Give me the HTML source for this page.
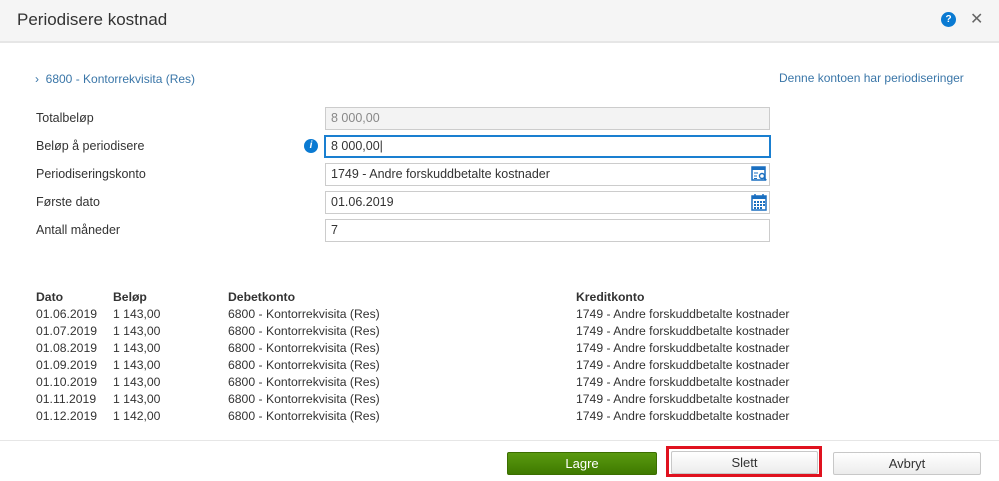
<!DOCTYPE html><html><head><style>
body{margin:0;width:999px;height:481px;background:#fff;font-family:"Liberation Sans",sans-serif;font-size:12.5px;color:#333;position:relative;overflow:hidden}
.a{position:absolute}
.hdr{left:0;top:0;width:999px;height:41px;background:#f5f5f5;border-bottom:2px solid #e6e6e6}
.inp{position:absolute;left:325px;width:438px;height:21px;border:1px solid #ccc;line-height:21px;padding-left:5px;box-sizing:content-box;font-size:12.5px}
.lbl{position:absolute;left:36px}
.btn{position:absolute;height:21px;line-height:21px;text-align:center;border:1px solid #c8c8c8;border-radius:2px;background:linear-gradient(#fff,#ececec);font-size:13px}
td{padding:0;height:17px;font-size:12.2px;white-space:nowrap}
</style></head><body>
<div class="a hdr"></div>
<div class="a" style="left:17px;top:10px;font-size:17px;color:#333">Periodisere kostnad</div>
<div class="a" style="left:941px;top:12px;width:15px;height:15px;border-radius:50%;background:#0a7ad2;color:#fff;font-size:10px;font-weight:bold;text-align:center;line-height:15px">?</div>
<div class="a" style="left:970px;top:9px;font-size:16px;color:#666">✕</div>
<div class="a" style="left:35px;top:72px;color:#3a76a8;font-size:12px">›&nbsp; 6800 - Kontorrekvisita (Res)</div>
<div class="a" style="left:779px;top:71px;color:#3a76a8;font-size:12px">Denne kontoen har periodiseringer</div>
<div class="lbl" style="top:111px">Totalbeløp</div>
<div class="lbl" style="top:139px">Beløp å periodisere</div>
<div class="lbl" style="top:167px">Periodiseringskonto</div>
<div class="lbl" style="top:195px">Første dato</div>
<div class="lbl" style="top:223px">Antall måneder</div>
<div class="inp" style="top:107px;background:#f3f3f3;color:#888">8 000,00</div>
<div class="inp" style="top:135px;border:2px solid #1a7fd0;left:324px;height:19px;line-height:19px">8 000,00|</div>
<div class="inp" style="top:163px">1749 - Andre forskuddbetalte kostnader</div>
<div class="inp" style="top:191px">01.06.2019</div>
<div class="inp" style="top:219px">7</div>
<div class="a" style="left:304px;top:139px;width:14px;height:14px;border-radius:50%;background:#0a7ad2;color:#fff;font-size:10px;font-style:italic;font-weight:bold;text-align:center;line-height:14px">i</div>
<svg class="a" style="left:751px;top:166px" width="16" height="16" viewBox="0 0 16 16"><rect x="1" y="1" width="13" height="13" fill="none" stroke="#1a6fc0" stroke-width="1.5"/><rect x="1" y="1" width="13" height="3" fill="#1a6fc0"/><path d="M3 7h4M3 10h3M3 12.5h3" stroke="#1a6fc0"/><circle cx="11" cy="10" r="2.5" fill="#fff" stroke="#1a6fc0" stroke-width="1.4"/><path d="M12.8 11.8l2.5 2.5" stroke="#1a6fc0" stroke-width="1.6"/></svg>
<svg class="a" style="left:751px;top:193px" width="16" height="18" viewBox="0 0 16 18"><rect x="1" y="3" width="14" height="14" fill="#fff" stroke="#1a6fc0" stroke-width="1.5"/><rect x="1" y="3" width="14" height="3" fill="#1a6fc0"/><path d="M4 1v4M12 1v4" stroke="#1a6fc0" stroke-width="1.5"/><g fill="#1a6fc0"><rect x="3" y="8" width="2" height="2"/><rect x="6" y="8" width="2" height="2"/><rect x="9" y="8" width="2" height="2"/><rect x="12" y="8" width="2" height="2"/><rect x="3" y="11" width="2" height="2"/><rect x="6" y="11" width="2" height="2"/><rect x="9" y="11" width="2" height="2"/><rect x="12" y="11" width="2" height="2"/><rect x="3" y="14" width="2" height="2"/><rect x="6" y="14" width="2" height="2"/><rect x="9" y="14" width="2" height="2"/></g></svg>
<table class="a" style="left:36px;top:288px;border-collapse:collapse">
<tr><td style="width:77px;font-weight:bold">Dato</td><td style="width:115px;font-weight:bold">Beløp</td><td style="width:348px;font-weight:bold">Debetkonto</td><td style="font-weight:bold">Kreditkonto</td></tr>
<tr><td>01.06.2019</td><td>1 143,00</td><td>6800 - Kontorrekvisita (Res)</td><td>1749 - Andre forskuddbetalte kostnader</td></tr>
<tr><td>01.07.2019</td><td>1 143,00</td><td>6800 - Kontorrekvisita (Res)</td><td>1749 - Andre forskuddbetalte kostnader</td></tr>
<tr><td>01.08.2019</td><td>1 143,00</td><td>6800 - Kontorrekvisita (Res)</td><td>1749 - Andre forskuddbetalte kostnader</td></tr>
<tr><td>01.09.2019</td><td>1 143,00</td><td>6800 - Kontorrekvisita (Res)</td><td>1749 - Andre forskuddbetalte kostnader</td></tr>
<tr><td>01.10.2019</td><td>1 143,00</td><td>6800 - Kontorrekvisita (Res)</td><td>1749 - Andre forskuddbetalte kostnader</td></tr>
<tr><td>01.11.2019</td><td>1 143,00</td><td>6800 - Kontorrekvisita (Res)</td><td>1749 - Andre forskuddbetalte kostnader</td></tr>
<tr><td>01.12.2019</td><td>1 142,00</td><td>6800 - Kontorrekvisita (Res)</td><td>1749 - Andre forskuddbetalte kostnader</td></tr>
</table>
<div class="a" style="left:0;top:440px;width:999px;height:1px;background:#e6e6e6"></div>
<div class="btn" style="left:507px;top:452px;width:148px;background:linear-gradient(#5a9a10,#3f7a00);border-color:#3c6e00;color:#fff">Lagre</div>
<div class="a" style="left:666px;top:446px;width:150px;height:25px;border:3px solid #e0121f"></div>
<div class="btn" style="left:671px;top:451px;width:145px">Slett</div>
<div class="btn" style="left:833px;top:452px;width:146px">Avbryt</div>
</body></html>
